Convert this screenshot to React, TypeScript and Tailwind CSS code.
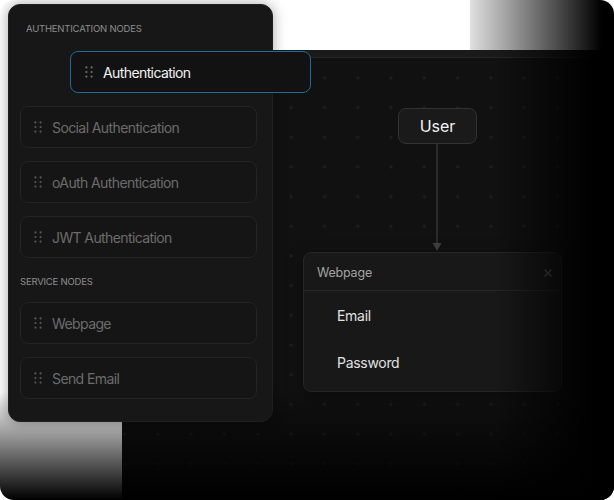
import React from "react";

type NodeItem = { label: string };

const authNodes: NodeItem[] = [
  { label: "Social Authentication" },
  { label: "oAuth Authentication" },
  { label: "JWT Authentication" },
];

const serviceNodes: NodeItem[] = [{ label: "Webpage" }, { label: "Send Email" }];

function GripIcon({ className }: { className?: string }) {
  return (
    <svg width="8" height="12" viewBox="0 0 8 12" className={className} fill="currentColor">
      <circle cx="1.4" cy="1.4" r="1.1" />
      <circle cx="6.6" cy="1.4" r="1.1" />
      <circle cx="1.4" cy="6" r="1.1" />
      <circle cx="6.6" cy="6" r="1.1" />
      <circle cx="1.4" cy="10.6" r="1.1" />
      <circle cx="6.6" cy="10.6" r="1.1" />
    </svg>
  );
}

function SidebarItem({ label }: NodeItem) {
  return (
    <div className="flex h-[42px] items-center gap-[10px] rounded-[8px] border border-[#242424] bg-[#151515] pl-[13px]">
      <GripIcon className="text-[#575757]" />
      <span className="text-[14px] tracking-[-0.6px] text-[#6c6c6c]">{label}</span>
    </div>
  );
}

function Sidebar() {
  return (
    <aside className="absolute left-[8px] top-[4px] flex h-[418px] w-[265px] flex-col rounded-[12px] border border-[#1f1f1f] bg-[#171717] pl-[11px] pr-[15px] pt-[18px] shadow-[0_0_14px_rgba(0,0,0,0.35)]">
      <p className="pl-[6px] text-[9.5px] leading-[12px] tracking-[-0.2px] text-[#8e8e8e]">
        AUTHENTICATION NODES
      </p>
      <div className="mt-[71px] flex flex-col gap-[13px]">
        {authNodes.map((n) => (
          <SidebarItem key={n.label} label={n.label} />
        ))}
      </div>
      <p className="mt-[18px] text-[9.5px] leading-[12px] tracking-[-0.2px] text-[#8e8e8e]">
        SERVICE NODES
      </p>
      <div className="mt-[14px] flex flex-col gap-[13px]">
        {serviceNodes.map((n) => (
          <SidebarItem key={n.label} label={n.label} />
        ))}
      </div>
    </aside>
  );
}

function DraggedItem() {
  return (
    <div className="absolute left-[70px] top-[51px] flex h-[42px] w-[241px] items-center gap-[10px] rounded-[8px] border border-[#1e6c93] bg-[#121212] pl-[14px]">
      <GripIcon className="text-[#6e6e6e]" />
      <span className="text-[14px] tracking-[-0.6px] text-[#f2f2f2]">Authentication</span>
    </div>
  );
}

function Canvas() {
  return (
    <div className="relative overflow-hidden bg-[#111111]">
      <div className="h-[8px] border-b border-[#262626] bg-[#1a1a1a]" />
      <div className="absolute inset-x-0 bottom-0 top-[9px] bg-[radial-gradient(circle,#1f1f1f_1.3px,transparent_1.8px)] bg-[size:33.3px_29.7px] bg-[position:-14px_4px]" />

      {/* user node */}
      <div className="absolute left-[276px] top-[58px] flex h-[36px] w-[79px] items-center justify-center rounded-[8px] border border-[#323232] bg-[#1a1a1a] text-[16px] text-[#f2f2f2]">
        User
      </div>

      {/* edge */}
      <svg className="absolute left-[310px] top-[94px]" width="10" height="108" viewBox="0 0 10 108">
        <line x1="5" y1="0" x2="5" y2="100" stroke="#3e3e3e" strokeWidth="1.2" />
        <polygon points="0.5,99 9.5,99 5,107" fill="#3e3e3e" />
      </svg>

      {/* webpage node */}
      <div className="absolute left-[181px] top-[202px] flex h-[140px] w-[259px] flex-col rounded-[8px] border border-[#262626] bg-[#181818] shadow-[0_4px_16px_rgba(0,0,0,0.35)]">
        <div className="flex h-[38px] items-center justify-between border-b border-[#262626] pl-[13px] pr-[9px] pt-[3px]">
          <span className="text-[12.5px] tracking-[-0.2px] text-[#a3a3a3]">Webpage</span>
          <svg width="8" height="8" viewBox="0 0 8 8" stroke="#555" strokeWidth="1.1">
            <line x1="0.5" y1="0.5" x2="7.5" y2="7.5" />
            <line x1="7.5" y1="0.5" x2="0.5" y2="7.5" />
          </svg>
        </div>
        <div className="flex flex-col gap-[27px] pl-[33px] pt-[15px] text-[14px] leading-[20px] tracking-[-0.3px] text-[#e2e2e2]">
          <span>Email</span>
          <span>Password</span>
        </div>
      </div>

      {/* fades */}
      <div className="pointer-events-none absolute inset-0 bg-[linear-gradient(to_right,transparent_0%,transparent_76%,#000_96%)]" />
      <div className="pointer-events-none absolute inset-0 bg-[linear-gradient(to_bottom,transparent_0%,transparent_75%,#000_100%)]" />
    </div>
  );
}

export default function App() {
  return (
    <div className="relative h-[500px] w-[614px] overflow-hidden rounded-[14px] bg-white font-['Inter',sans-serif]">
      <div className="grid h-full grid-cols-[122px_1fr] grid-rows-[50px_1fr]">
        <div className="bg-white" />
        <div className="bg-[linear-gradient(to_right,#fff_0%,#fff_70.7%,#e0e0e0_70.7%,#000_97.5%)]" />
        <div className="bg-[linear-gradient(to_bottom,#fff_0%,#fff_76%,#000_100%)]" />
        <Canvas />
      </div>
      <Sidebar />
      <DraggedItem />
    </div>
  );
}
